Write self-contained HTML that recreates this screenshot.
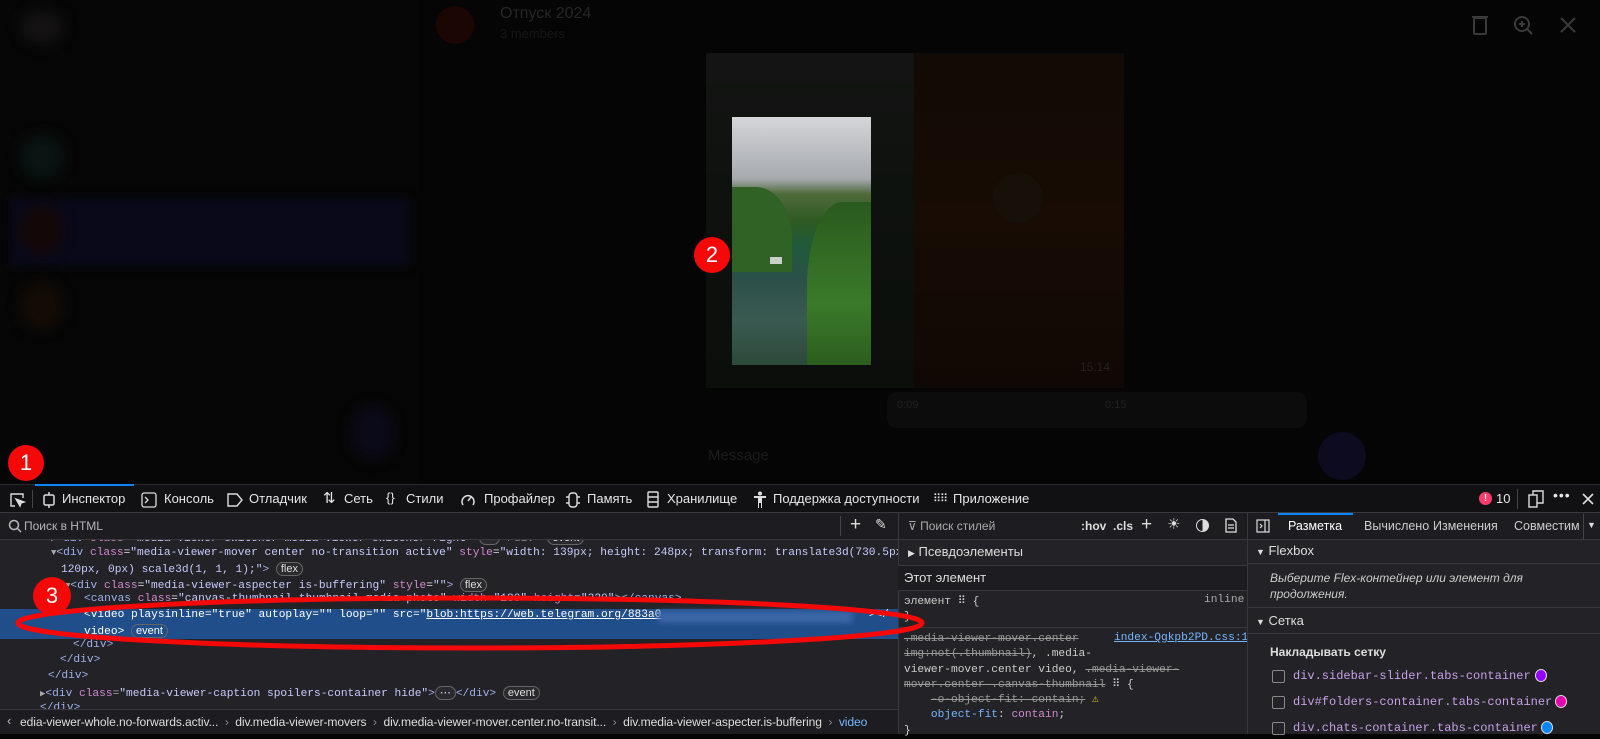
<!DOCTYPE html>
<html><head><meta charset="utf-8">
<style>
*{margin:0;padding:0;box-sizing:border-box}
body{width:1600px;height:734px;overflow:hidden;background:#050505;font-family:"Liberation Sans","DejaVu Sans",sans-serif;position:relative;color:#e0e0e6}
.a{position:absolute}
.m{font-family:"Liberation Mono","DejaVu Sans Mono",monospace;font-size:11.2px;white-space:pre}
.t{color:#9fb0ec}.n{color:#d487d0}.v{color:#c8c8ff}
.badge{display:inline-block;border:1px solid #666;border-radius:8px;padding:0 4px;font-size:11px;line-height:12px;color:#ddd;font-family:"Liberation Sans",sans-serif;background:#2a2a2e}
.tab{position:absolute;top:491px;font-size:13px;color:#e6e6ea}
.dot{position:absolute;border-radius:50%;background:#f40808;color:#fff;font-size:22px;text-align:center;font-family:"Liberation Sans",sans-serif}
</style></head><body>
<!-- sidebar -->
<div class="a" style="left:0;top:0;width:418px;height:484px;background:#060606"></div>
<div class="a" style="left:20px;top:10px;width:44px;height:34px;border-radius:50%;background:#141212;filter:blur(6px)"></div>
<div class="a" style="left:20px;top:135px;width:44px;height:44px;border-radius:50%;background:#0a1412;filter:blur(6px)"></div>
<div class="a" style="left:10px;top:198px;width:400px;height:68px;background:#09091a;filter:blur(4px)"></div>
<div class="a" style="left:20px;top:205px;width:44px;height:50px;border-radius:50%;background:#140707;filter:blur(6px)"></div>
<div class="a" style="left:20px;top:282px;width:44px;height:48px;border-radius:50%;background:#130c06;filter:blur(6px)"></div>
<div class="a" style="left:350px;top:405px;width:45px;height:55px;border-radius:50%;background:#0b0a18;filter:blur(6px)"></div>
<!-- header -->
<div class="a" style="left:436px;top:6px;width:38px;height:38px;border-radius:50%;background:#1c0604"></div>
<div class="a" style="left:500px;top:5px;font-size:16px;color:#262626">Отпуск 2024</div>
<div class="a" style="left:500px;top:26px;font-size:13px;color:#161616">3 members</div>
<svg class="a" style="left:1470px;top:14px" width="110" height="24" fill="none" stroke="#3a3a3a" stroke-width="2"><rect x="4" y="4" width="12" height="16" rx="1"/><line x1="2" y1="3" x2="18" y2="3"/><circle cx="52" cy="10" r="7"/><line x1="57" y1="15" x2="62" y2="20"/><line x1="49" y1="10" x2="55" y2="10"/><line x1="52" y1="7" x2="52" y2="13"/><line x1="91" y1="4" x2="105" y2="18"/><line x1="105" y1="4" x2="91" y2="18"/></svg>
<!-- media -->
<div class="a" style="left:706px;top:53px;width:208px;height:335px;background:linear-gradient(#141414,#0e120e 40%,#0b0e0b)"></div>
<div class="a" style="left:914px;top:53px;width:210px;height:335px;background:linear-gradient(#120a04,#180c04 50%,#100804)"></div>
<div class="a" style="left:993px;top:173px;width:50px;height:50px;border-radius:50%;background:#161008"></div>
<div class="a" style="left:1080px;top:360px;font-size:12px;color:#222">15:14</div>
<div class="a" style="left:732px;top:117px;width:139px;height:248px;overflow:hidden;background:linear-gradient(180deg,#d4d6d9 0%,#a6a9ae 25%,#4f6a3c 31%,#2f5a22 42%,#1f5a3a 52%,#2b5048 65%,#3a5a52 82%,#2c4a3a 100%)">
<div class="a" style="left:0;top:70px;width:60px;height:85px;background:#2f6224;border-radius:0 60% 0 0"></div>
<div class="a" style="left:75px;top:85px;width:70px;height:170px;background:linear-gradient(#2a5a1e,#3a7a2a 60%,#2a5a1e);border-radius:50% 0 0 0"></div>
<div class="a" style="left:38px;top:140px;width:12px;height:7px;background:#c9d0c8"></div>
</div>
<div class="a" style="left:887px;top:392px;width:420px;height:36px;border-radius:10px;background:#0c0c0c"></div>
<div class="a" style="left:897px;top:399px;font-size:11px;color:#222">0:09</div>
<div class="a" style="left:1105px;top:399px;font-size:11px;color:#222">0:15</div>
<div class="a" style="left:1318px;top:432px;width:48px;height:48px;border-radius:50%;background:#0d0b20"></div>
<div class="a" style="left:708px;top:447px;font-size:15px;color:#1c1c1c">Message</div>
<!-- devtools toolbar -->
<div class="a" style="left:0;top:484px;width:1600px;height:29px;background:#111114;border-top:1px solid #2a2a2e;border-bottom:1px solid #38383d"></div>
<div class="a" style="left:35px;top:484px;width:99px;height:2px;background:#0a84ff"></div>
<svg class="a" style="left:8px;top:491px" width="18" height="18" fill="none" stroke="#ddd" stroke-width="1.4"><path d="M7 15H3V3h12v4"/><path d="M8 8l8 3-3 1-1 3z" fill="#ddd"/></svg>
<div class="a" style="left:32px;top:490px;width:1px;height:18px;background:#444"></div>
<svg class="a" style="left:42px;top:492px" width="14" height="16" fill="none" stroke="#ddd" stroke-width="1.5"><rect x="2" y="3" width="10" height="10" rx="1.5"/><path d="M7 0v3M7 13v3"/></svg>
<div class="tab" style="left:62px">Инспектор</div>
<svg class="a" style="left:141px;top:492px" width="16" height="16" fill="none" stroke="#ddd" stroke-width="1.3"><rect x="1" y="1" width="14" height="14" rx="2"/><path d="M4 5l3 3-3 3"/></svg>
<div class="tab" style="left:164px">Консоль</div>
<svg class="a" style="left:227px;top:493px" width="16" height="14" fill="none" stroke="#ddd" stroke-width="1.4"><path d="M1 1h9l5 6-5 6H1z"/></svg>
<div class="tab" style="left:249px">Отладчик</div>
<div class="tab" style="left:323px;font-size:15px;top:489px">⇅</div>
<div class="tab" style="left:344px">Сеть</div>
<div class="tab" style="left:386px;top:490px">{}</div>
<div class="tab" style="left:406px">Стили</div>
<svg class="a" style="left:460px;top:492px" width="16" height="16" fill="none" stroke="#ddd" stroke-width="1.5"><path d="M3 13A6 6 0 1 1 13 13"/><path d="M8 9l3-4"/></svg>
<div class="tab" style="left:484px">Профайлер</div>
<svg class="a" style="left:565px;top:492px" width="16" height="16" fill="none" stroke="#ddd" stroke-width="1.4"><rect x="4" y="1" width="8" height="14" rx="3"/><path d="M1 5h3M1 11h3M12 5h3M12 11h3"/></svg>
<div class="tab" style="left:587px">Память</div>
<svg class="a" style="left:647px;top:491px" width="12" height="17" fill="none" stroke="#ddd" stroke-width="1.4"><rect x="1" y="1" width="10" height="15" rx="1"/><path d="M1 6h10M1 11h10"/></svg>
<div class="tab" style="left:667px">Хранилище</div>
<svg class="a" style="left:753px;top:491px" width="14" height="18" fill="#ddd"><circle cx="7" cy="2.5" r="2"/><path d="M1 5h12v2H9v10H8v-5H6v5H5V7H1z"/></svg>
<div class="tab" style="left:773px">Поддержка доступности</div>
<div class="tab" style="left:933px;font-size:11px;letter-spacing:-1px;top:492px">⠿⠿</div>
<div class="tab" style="left:953px">Приложение</div>
<div class="a" style="left:1479px;top:492px;width:13px;height:13px;border-radius:50%;background:#ff3b6b;color:#fff;font-size:10px;text-align:center;line-height:13px;font-weight:bold">!</div>
<div class="tab" style="left:1496px">10</div>
<div class="a" style="left:1517px;top:489px;width:1px;height:20px;background:#444"></div>
<svg class="a" style="left:1527px;top:490px" width="18" height="18" fill="none" stroke="#ddd" stroke-width="1.4"><rect x="2" y="5" width="8" height="12"/><path d="M6 5V1h10v12h-6"/></svg>
<div class="tab" style="left:1553px;top:487px;font-size:14px;letter-spacing:1px">•••</div>
<svg class="a" style="left:1581px;top:492px" width="14" height="14" stroke="#ddd" stroke-width="1.6"><path d="M2 2l10 10M12 2L2 12"/></svg>
<!-- panels bg -->
<div class="a" style="left:0;top:513px;width:898px;height:196px;background:#232327"></div>
<div class="a" style="left:0;top:513px;width:898px;height:27px;background:#1d1d21;border-bottom:1px solid #38383d"></div>
<svg class="a" style="left:8px;top:519px" width="14" height="14" fill="none" stroke="#bbb" stroke-width="1.5"><circle cx="6" cy="6" r="4.5"/><path d="M9 9l4 4"/></svg>
<div class="a" style="left:24px;top:519px;font-size:12px;color:#b5b5b9">Поиск в HTML</div>
<div class="a" style="left:840px;top:516px;width:1px;height:20px;background:#444"></div>
<div class="a" style="left:850px;top:514px;font-size:19px;color:#ddd">+</div>
<div class="a" style="left:875px;top:516px;font-size:14px;color:#ddd">✎</div>
<!-- tree -->
<div class="a" style="left:0;top:540px;width:898px;height:169px;overflow:hidden">
<div class="a m" style="left:51px;top:-9px;color:#888"><span style="font-size:9px">▶</span><span class="t">&lt;div</span> <span class="n">class</span>=<span class="v">"media-viewer-switcher media-viewer-switcher-right"</span>&gt;<span class="badge">⋯</span>&lt;/div&gt; <span class="badge">event</span></div>
<div class="a m" style="left:51px;top:7px"><span style="font-size:9px;color:#aaa">▼</span><span class="t">&lt;div</span> <span class="n">class</span>=<span class="v">"media-viewer-mover center no-transition active"</span> <span class="n">style</span>=<span class="v">"width: 139px; height: 248px; transform: translate3d(730.5px,</span></div>
<div class="a m" style="left:61px;top:22px"><span class="v">120px, 0px) scale3d(1, 1, 1);"</span><span class="t">&gt;</span> <span class="badge">flex</span></div>
<div class="a m" style="left:65px;top:38px"><span style="font-size:9px;color:#aaa">▼</span><span class="t">&lt;div</span> <span class="n">class</span>=<span class="v">"media-viewer-aspecter is-buffering"</span> <span class="n">style</span>=<span class="v">""</span><span class="t">&gt;</span> <span class="badge">flex</span></div>
<div class="a m" style="left:84px;top:53px"><span class="t">&lt;canvas</span> <span class="n">class</span>=<span class="v">"canvas-thumbnail thumbnail media-photo"</span> <span class="n">width</span>=<span class="v">"180"</span> <span class="n">height</span>=<span class="v">"320"</span><span class="t">&gt;&lt;/canvas&gt;</span></div>
<div class="a" style="left:0;top:69px;width:898px;height:30px;background:#204e8a"></div>
<div class="a m" style="left:84px;top:69px;color:#fff">&lt;video playsinline="true" autoplay="" loop="" src="<u>blob:https://web.telegram.org/883a0</u></div>
<div class="a" style="left:658px;top:71px;width:195px;height:12px;background:#3a66a8;filter:blur(3px)"></div>
<div class="a m" style="left:862px;top:69px;color:#fff">"&gt;&lt;/</div>
<div class="a m" style="left:84px;top:84px;color:#fff">video&gt; <span class="badge" style="background:#204e8a;color:#fff">event</span></div>
<div class="a m t" style="left:73px;top:99px">&lt;/div&gt;</div>
<div class="a m t" style="left:60px;top:114px">&lt;/div&gt;</div>
<div class="a m t" style="left:48px;top:130px">&lt;/div&gt;</div>
<div class="a m" style="left:40px;top:146px;color:#aaa"><span style="font-size:9px">▶</span><span class="t">&lt;div</span> <span class="n">class</span>=<span class="v">"media-viewer-caption spoilers-container hide"</span><span class="t">&gt;</span><span class="badge">⋯</span><span class="t">&lt;/div&gt;</span> <span class="badge">event</span></div>
<div class="a m t" style="left:40px;top:162px">&lt;/div&gt;</div>
</div>
<!-- breadcrumb -->
<div class="a" style="left:0;top:709px;width:898px;height:25px;background:#1d1d21;border-top:1px solid #38383d"></div>
<div class="a" style="left:7px;top:713px;font-size:13px;color:#bbb">‹</div>
<div class="a" style="left:20px;top:715px;font-size:12.1px;color:#ddd;white-space:pre;letter-spacing:-0.1px">edia-viewer-whole.no-forwards.activ...  <span style="color:#888">›</span>  div.media-viewer-movers  <span style="color:#888">›</span>  div.media-viewer-mover.center.no-transit...  <span style="color:#888">›</span>  div.media-viewer-aspecter.is-buffering  <span style="color:#888">›</span>  <span style="color:#75b5ff">video</span></div>
<!-- style panel -->
<div class="a" style="left:898px;top:513px;width:349px;height:221px;background:#232327;border-left:1px solid #38383d"></div>
<div class="a" style="left:898px;top:513px;width:349px;height:27px;background:#1d1d21;border-bottom:1px solid #38383d;border-left:1px solid #38383d"></div>
<div class="a" style="left:908px;top:519px;font-size:12px;color:#aaa">⊽ Поиск стилей</div>
<div class="a" style="left:1081px;top:519px;font-size:12px;color:#ddd;font-weight:bold">:hov &nbsp;.cls</div>
<div class="a" style="left:1141px;top:514px;font-size:19px;color:#ddd">+</div>
<div class="a" style="left:1167px;top:515px;font-size:15px;color:#ddd">☀</div>
<div class="a" style="left:1196px;top:519px;width:13px;height:13px;border-radius:50%;border:1.5px solid #ddd;background:linear-gradient(90deg,transparent 50%,#ddd 50%)"></div>
<svg class="a" style="left:1225px;top:518px" width="12" height="15" fill="none" stroke="#ddd" stroke-width="1.3"><path d="M1 1h7l3 3v10H1z"/><path d="M3 7h6M3 10h6"/></svg>
<div class="a" style="left:908px;top:544px;font-size:13px;color:#ddd"><span style="font-size:9px">▶</span> Псевдоэлементы</div>
<div class="a" style="left:898px;top:565px;width:349px;height:26px;background:#1d1d21;border-top:1px solid #38383d;border-bottom:1px solid #38383d"></div>
<div class="a" style="left:904px;top:570px;font-size:13px;color:#ddd">Этот элемент</div>
<div class="a m" style="left:904px;top:594px;color:#ccc">элемент ⠿ {</div>
<div class="a m" style="left:1204px;top:594px;color:#aaa">inline</div>
<div class="a m" style="left:904px;top:611px;color:#ccc">}</div>
<div class="a" style="left:898px;top:627px;width:349px;height:1px;background:#38383d"></div>
<div class="a m" style="left:904px;top:632px;line-height:15.3px;color:#ccc"><s style="color:#999">.media-viewer-mover.center</s>
<s style="color:#999">img:not(.thumbnail)</s>, .media-
viewer-mover.center video, <s style="color:#999">.media-viewer-</s>
<s style="color:#999">mover.center .canvas-thumbnail</s> ⠿ {
    <s style="color:#999">-o-object-fit: contain;</s> <span style="color:#f5c518">⚠</span>
    <span style="color:#75b5ff">object-fit</span>: <span class="n">contain</span>;
}</div>
<div class="a m" style="left:1114px;top:632px;color:#75b5ff;text-decoration:underline">index-Qgkpb2PD.css:1</div>
<!-- right panel -->
<div class="a" style="left:1247px;top:513px;width:353px;height:221px;background:#232327;border-left:1px solid #38383d"></div>
<div class="a" style="left:1247px;top:513px;width:353px;height:27px;background:#1d1d21;border-bottom:1px solid #38383d;border-left:1px solid #38383d"></div>
<div class="a" style="left:1278px;top:513px;width:75px;height:2px;background:#0a84ff"></div>
<svg class="a" style="left:1256px;top:519px" width="14" height="14" fill="none" stroke="#ddd" stroke-width="1.2"><rect x="1" y="1" width="12" height="12"/><path d="M9 1v12M4 5l2 2-2 2"/></svg>
<div class="a" style="left:1288px;top:519px;font-size:12.5px;color:#fff">Разметка</div>
<div class="a" style="left:1364px;top:519px;font-size:12.5px;color:#ccc">Вычислено</div>
<div class="a" style="left:1433px;top:519px;font-size:12.5px;color:#ccc">Изменения</div>
<div class="a" style="left:1514px;top:519px;width:66px;overflow:hidden;font-size:12.5px;color:#ccc;white-space:nowrap">Совместимость</div>
<div class="a" style="left:1583px;top:514px;width:1px;height:26px;background:#444"></div>
<div class="a" style="left:1587px;top:520px;font-size:9px;color:#ddd">▼</div>
<div class="a" style="left:1256px;top:543px;font-size:13px;color:#ddd"><span style="font-size:9px">▼</span> Flexbox</div>
<div class="a" style="left:1247px;top:563px;width:353px;height:1px;background:#38383d"></div>
<div class="a" style="left:1270px;top:570px;font-size:12px;color:#ccc;font-style:italic;line-height:16px;width:320px">Выберите Flex-контейнер или элемент для продолжения.</div>
<div class="a" style="left:1247px;top:607px;width:353px;height:1px;background:#38383d"></div>
<div class="a" style="left:1256px;top:613px;font-size:13px;color:#ddd"><span style="font-size:9px">▼</span> Сетка</div>
<div class="a" style="left:1247px;top:633px;width:353px;height:1px;background:#38383d"></div>
<div class="a" style="left:1270px;top:645px;font-size:12px;color:#ddd;font-weight:bold">Накладывать сетку</div>
<div class="a" style="left:1272px;top:670px;width:13px;height:13px;border:1px solid #888;border-radius:2px"></div>
<div class="a m" style="left:1293px;top:669px;color:#c7a0e8;font-size:12px">div.sidebar-slider.tabs-container <span style="color:#ddd">⌖</span></div>
<div class="a" style="left:1535px;top:669px;width:12px;height:13px;border-radius:50%;background:#9400ff;border:1px solid #ddd"></div>
<div class="a" style="left:1272px;top:696px;width:13px;height:13px;border:1px solid #888;border-radius:2px"></div>
<div class="a m" style="left:1293px;top:695px;color:#c7a0e8;font-size:12px">div#folders-container.tabs-container <span style="color:#ddd">⌖</span></div>
<div class="a" style="left:1555px;top:695px;width:12px;height:13px;border-radius:50%;background:#e400b0;border:1px solid #ddd"></div>
<div class="a" style="left:1272px;top:722px;width:13px;height:13px;border:1px solid #888;border-radius:2px"></div>
<div class="a m" style="left:1293px;top:721px;color:#c7a0e8;font-size:12px">div.chats-container.tabs-container <span style="color:#ddd">⌖</span></div>
<div class="a" style="left:1541px;top:721px;width:12px;height:13px;border-radius:50%;background:#0a84ff;border:1px solid #ddd"></div>
<!-- annotations -->
<svg class="a" style="left:0;top:0" width="1600" height="734"><ellipse cx="470" cy="623" rx="452" ry="25" fill="none" stroke="#f40808" stroke-width="5"/></svg>
<div class="dot" style="left:8px;top:445px;width:36px;height:36px;line-height:36px">1</div>
<div class="dot" style="left:694px;top:237px;width:36px;height:36px;line-height:36px">2</div>
<div class="dot" style="left:33px;top:577px;width:38px;height:38px;line-height:38px">3</div>
</body></html>
